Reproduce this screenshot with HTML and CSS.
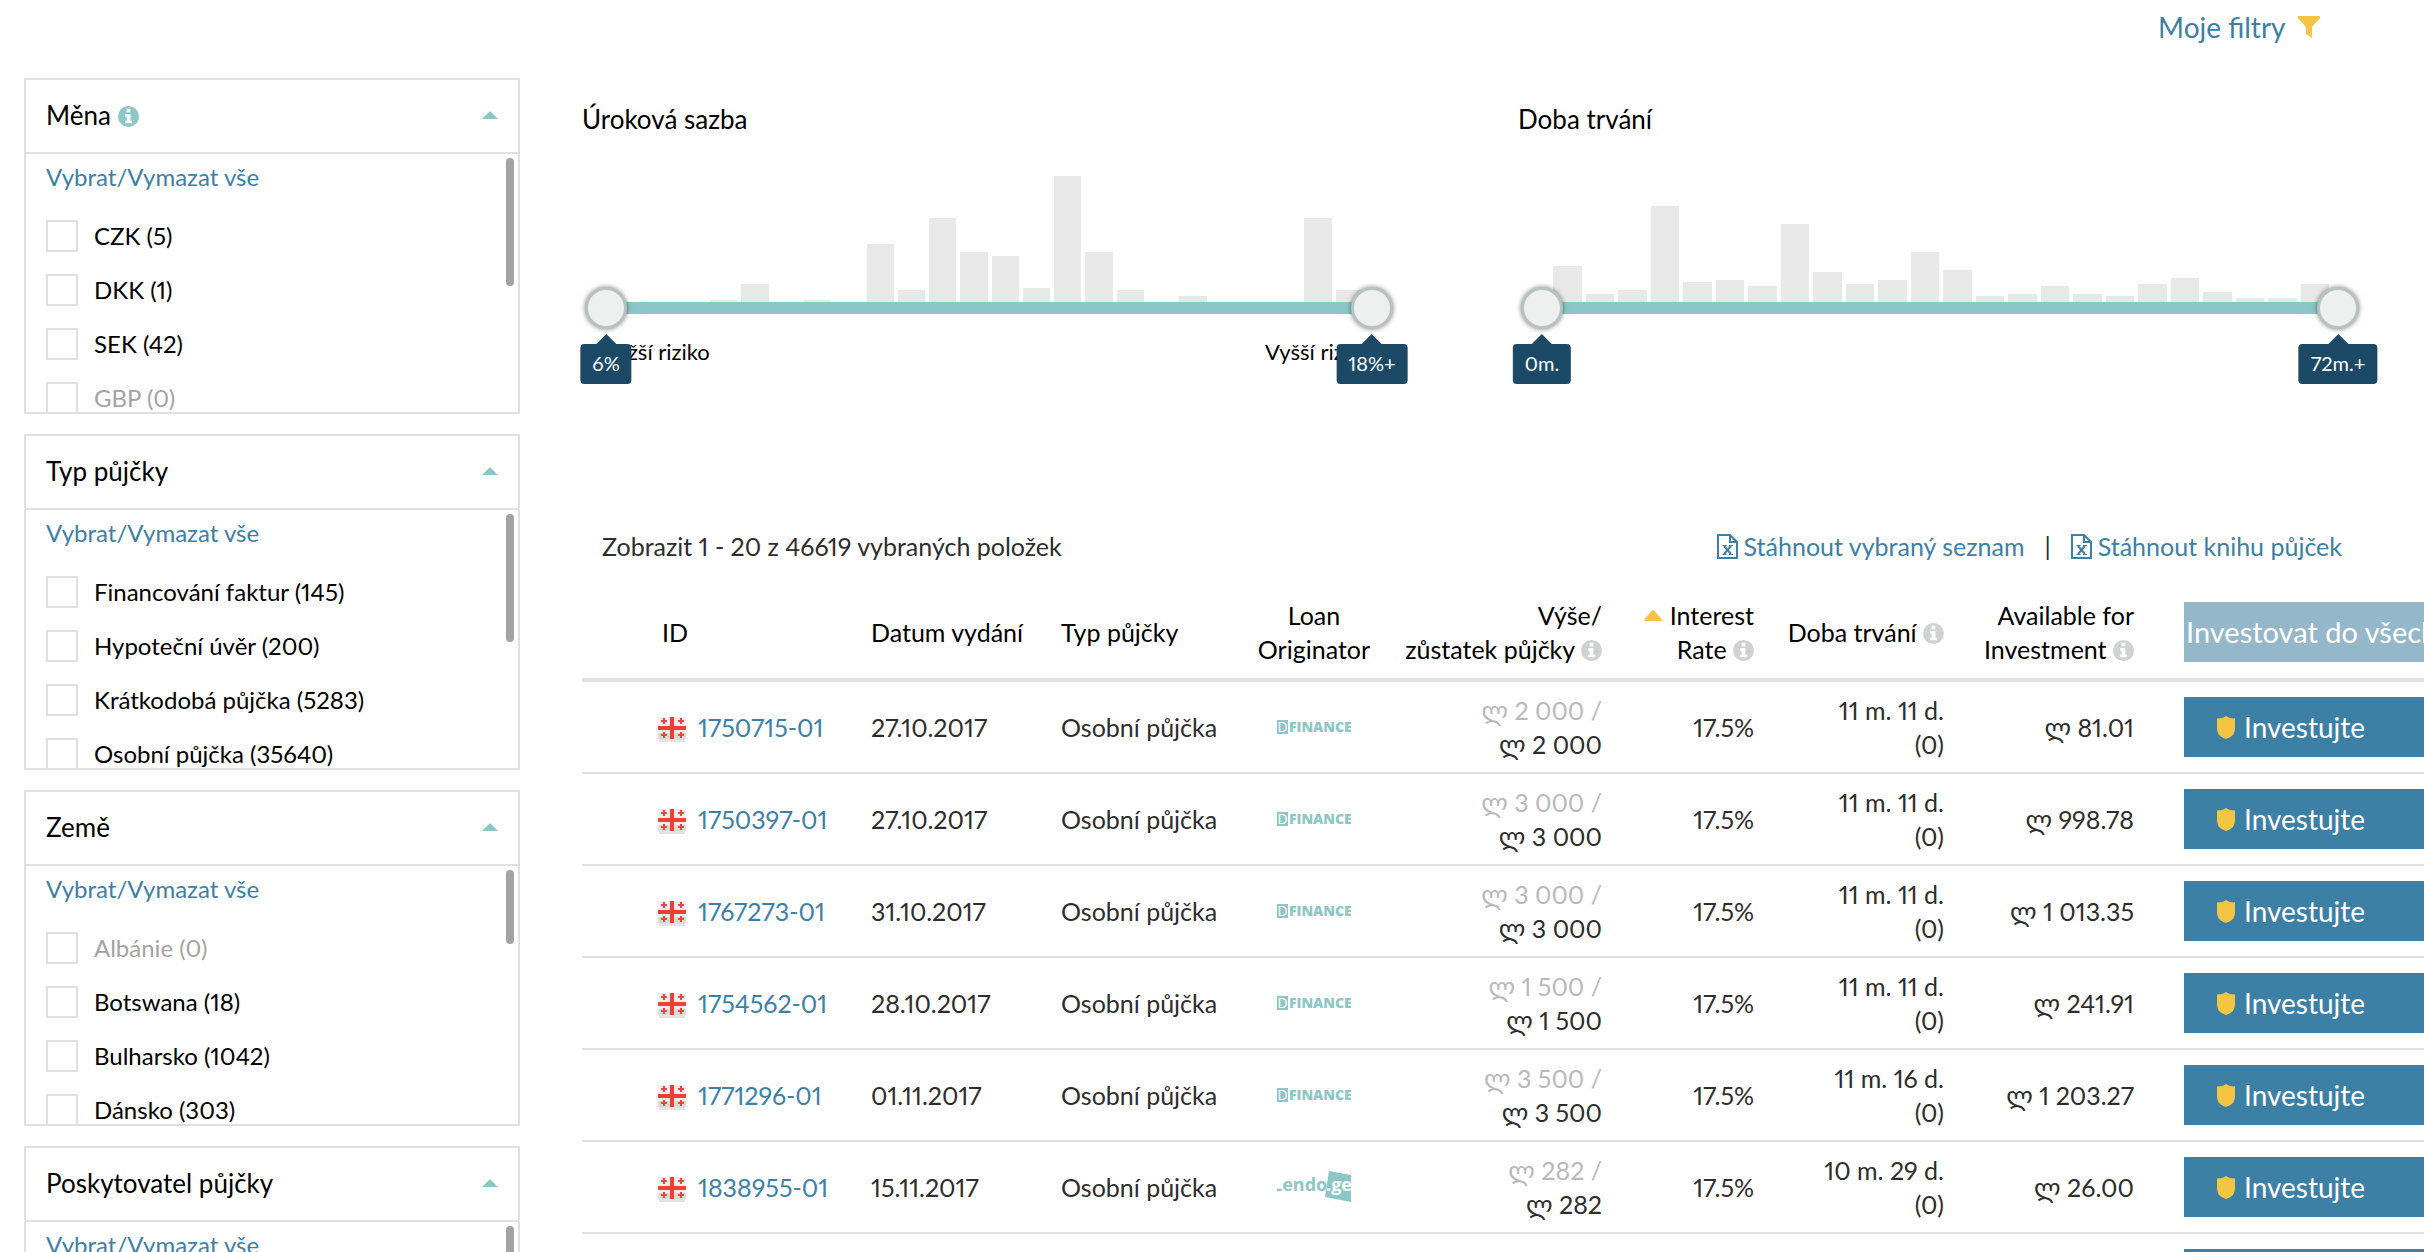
FILE: index.html
```html
<!DOCTYPE html>
<html lang="cs">
<head>
<meta charset="utf-8">
<meta name="viewport" content="width=device-width, initial-scale=1">
<title>Primární trh</title>
<link rel="stylesheet" href="styles.css">
</head>
<body>
<svg class="sprite" aria-hidden="true">
  <symbol id="info" viewBox="0 0 22 22"><circle cx="11" cy="11" r="11" fill="currentColor"/><path fill="#fff" d="M9 3h4v3.500H9zM7.500 8.500H13v7h1.800V18H7.500v-2.500H9V11H7.500z"/></symbol>
  <symbol id="caret" viewBox="0 0 16 8"><path fill="currentColor" d="M8 0l8 8H0z"/></symbol>
  <symbol id="sort" viewBox="0 0 18 11"><path fill="currentColor" d="M9 0q.7 0 1.300.7L17.500 9q1 2-.8 2H1.300q-1.800 0-.8-2L7.700.7Q8.300 0 9 0z"/></symbol>
  <symbol id="funnel" viewBox="0 0 22 22"><path fill="currentColor" d="M0 0h22v2l-8 9v11l-6-4v-7L0 2z"/></symbol>
  <symbol id="shield" viewBox="0 0 20 23"><path fill="currentColor" d="M10 0q3 2.500 9 2.500V12q0 7-5.500 9.500L10 23l-3.500-1.500Q1 19 1 12V2.500q6 0 9-2.500z"/></symbol>
  <symbol id="xls" viewBox="0 0 21 25"><path fill="none" stroke="currentColor" stroke-width="2" d="M1 1h12l7 7v16H1zM13 1v7h7"/><path fill="none" stroke="currentColor" stroke-width="2" d="M7 12l7 8M14 12l-7 8"/><path fill="none" stroke="currentColor" d="M5.500 11.500h4M12 11.500h4M5.500 20.500h4M12 20.500h4"/></symbol>
  <symbol id="flag-ge" viewBox="0 0 28 28"><path fill="#c9c9c9" opacity=".5" d="M1 22h26v4H1z"/><path fill="#efedec" d="M0 1h28v22H0z"/><path fill="#dbdad9" d="M0 17h28v6H0z"/><path fill="#ee4035" d="M12 1h4v22h-4zM0 10h28v4H0z"/><path fill="#e8483f" d="M5 2h2v2h2v2H7v2H5V6H3V4h2zM22 2h2v2h2v2h-2v2h-2V6h-2V4h2zM5 16h2v2h2v2H7v2H5v-2H3v-2h2zM22 16h2v2h2v2h-2v2h-2v-2h-2v-2h2z"/></symbol>
</svg>

<header class="topbar"><a class="my-filters" href="#">Moje filtry <svg class="i-funnel"><use href="#funnel"/></svg></a></header>

<div class="page">
  <aside class="sidebar">
    <section class="panel">
      <h2 class="panel-head"><span>Měna <svg class="i-info teal"><use href="#info"/></svg></span><svg class="i-caret"><use href="#caret"/></svg></h2>
      <div class="panel-body">
        <a href="#">Vybrat/Vymazat vše</a>
        <label><input type="checkbox">CZK (5)</label>
        <label><input type="checkbox">DKK (1)</label>
        <label><input type="checkbox">SEK (42)</label>
        <label class="off"><input type="checkbox" disabled>GBP (0)</label>
        <span class="thumb"></span>
      </div>
    </section>
    <section class="panel">
      <h2 class="panel-head"><span>Typ půjčky</span><svg class="i-caret"><use href="#caret"/></svg></h2>
      <div class="panel-body">
        <a href="#">Vybrat/Vymazat vše</a>
        <label><input type="checkbox">Financování faktur (145)</label>
        <label><input type="checkbox">Hypoteční úvěr (200)</label>
        <label><input type="checkbox">Krátkodobá půjčka (5283)</label>
        <label><input type="checkbox">Osobní půjčka (35640)</label>
        <span class="thumb"></span>
      </div>
    </section>
    <section class="panel">
      <h2 class="panel-head"><span>Země</span><svg class="i-caret"><use href="#caret"/></svg></h2>
      <div class="panel-body">
        <a href="#">Vybrat/Vymazat vše</a>
        <label class="off"><input type="checkbox" disabled>Albánie (0)</label>
        <label><input type="checkbox">Botswana (18)</label>
        <label><input type="checkbox">Bulharsko (1042)</label>
        <label><input type="checkbox">Dánsko (303)</label>
        <span class="thumb thumb-short"></span>
      </div>
    </section>
    <section class="panel">
      <h2 class="panel-head"><span>Poskytovatel půjčky</span><svg class="i-caret"><use href="#caret"/></svg></h2>
      <div class="panel-body">
        <a href="#">Vybrat/Vymazat vše</a>
        <span class="thumb"></span>
      </div>
    </section>
  </aside>

  <main class="content">
    <div class="sliders">
      <section>
        <h2 class="slider-title">Úroková sazba</h2>
        <div class="slider">
          <div class="bars">
            <i></i><i></i><i></i><i></i><i style="height:2px"></i><i style="height:18px"></i><i></i><i style="height:2px"></i><i></i><i style="height:58px"></i><i style="height:12px"></i><i style="height:84px"></i><i style="height:50px"></i><i style="height:46px"></i><i style="height:14px"></i><i style="height:126px"></i><i style="height:50px"></i><i style="height:12px"></i><i></i><i style="height:6px"></i><i></i><i></i><i></i><i style="height:84px"></i><i style="height:12px"></i>
          </div>
          <div class="range">
            <input type="range" min="6" max="18" value="6" aria-label="Úroková sazba od">
            <input type="range" min="6" max="18" value="18" aria-label="Úroková sazba do">
            <output class="tip tip-min">6%</output>
            <output class="tip tip-max">18%+</output>
          </div>
          <div class="risk"><span>Nižší riziko</span><span>Vyšší riziko</span></div>
        </div>
      </section>
      <section>
        <h2 class="slider-title">Doba trvání</h2>
        <div class="slider">
          <div class="bars">
            <i></i><i style="height:36px"></i><i style="height:8px"></i><i style="height:12px"></i><i style="height:96px"></i><i style="height:20px"></i><i style="height:22px"></i><i style="height:16px"></i><i style="height:78px"></i><i style="height:30px"></i><i style="height:18px"></i><i style="height:22px"></i><i style="height:50px"></i><i style="height:32px"></i><i style="height:6px"></i><i style="height:8px"></i><i style="height:16px"></i><i style="height:8px"></i><i style="height:6px"></i><i style="height:18px"></i><i style="height:24px"></i><i style="height:10px"></i><i style="height:4px"></i><i style="height:4px"></i><i style="height:18px"></i>
          </div>
          <div class="range">
            <input type="range" min="0" max="72" value="0" aria-label="Doba trvání od">
            <input type="range" min="0" max="72" value="72" aria-label="Doba trvání do">
            <output class="tip tip-min">0m.</output>
            <output class="tip tip-max">72m.+</output>
          </div>
        </div>
      </section>
    </div>

    <div class="summary">
      <span>Zobrazit 1 - 20 z 46619 vybraných položek</span>
      <span class="downloads">
        <a href="#"><svg class="i-xls"><use href="#xls"/></svg>Stáhnout vybraný seznam</a>
        <span>|</span>
        <a href="#"><svg class="i-xls"><use href="#xls"/></svg>Stáhnout knihu půjček</a>
      </span>
    </div>

    <table class="loans">
      <colgroup><col class="c-id"><col class="c-text"><col class="c-text"><col class="c-orig"><col class="c-amount"><col class="c-rate"><col class="c-term"><col class="c-term"><col></colgroup>
      <thead>
        <tr>
          <th class="id">ID</th><th>Datum vydání</th><th>Typ půjčky</th><th class="orig">Loan<br>Originator</th>
          <th class="num">Výše/<br>zůstatek půjčky <svg class="i-info"><use href="#info"/></svg></th>
          <th class="num"><svg class="i-sort"><use href="#sort"/></svg> Interest<br>Rate <svg class="i-info"><use href="#info"/></svg></th>
          <th class="num">Doba trvání <svg class="i-info"><use href="#info"/></svg></th>
          <th class="num">Available for<br>Investment <svg class="i-info"><use href="#info"/></svg></th>
          <th class="act"><button class="btn btn-all" disabled>Investovat do všech</button></th>
        </tr>
      </thead>
      <tbody>
        <tr>
          <td class="id"><svg class="i-flag"><use href="#flag-ge"/></svg><a href="#">1750715-01</a></td><td>27.10.2017</td><td>Osobní půjčka</td>
          <td class="orig"><span class="logo-d"><b>D</b>FINANCE</span></td>
          <td class="num"><span class="dim">ლ 2 000 /</span><br>ლ 2 000</td><td class="num">17.5%</td><td class="num">11 m. 11 d.<br>(0)</td><td class="num">ლ 81.01</td>
          <td class="act"><button class="btn"><svg class="i-shield"><use href="#shield"/></svg>Investujte</button></td>
        </tr>
        <tr>
          <td class="id"><svg class="i-flag"><use href="#flag-ge"/></svg><a href="#">1750397-01</a></td><td>27.10.2017</td><td>Osobní půjčka</td>
          <td class="orig"><span class="logo-d"><b>D</b>FINANCE</span></td>
          <td class="num"><span class="dim">ლ 3 000 /</span><br>ლ 3 000</td><td class="num">17.5%</td><td class="num">11 m. 11 d.<br>(0)</td><td class="num">ლ 998.78</td>
          <td class="act"><button class="btn"><svg class="i-shield"><use href="#shield"/></svg>Investujte</button></td>
        </tr>
        <tr>
          <td class="id"><svg class="i-flag"><use href="#flag-ge"/></svg><a href="#">1767273-01</a></td><td>31.10.2017</td><td>Osobní půjčka</td>
          <td class="orig"><span class="logo-d"><b>D</b>FINANCE</span></td>
          <td class="num"><span class="dim">ლ 3 000 /</span><br>ლ 3 000</td><td class="num">17.5%</td><td class="num">11 m. 11 d.<br>(0)</td><td class="num">ლ 1 013.35</td>
          <td class="act"><button class="btn"><svg class="i-shield"><use href="#shield"/></svg>Investujte</button></td>
        </tr>
        <tr>
          <td class="id"><svg class="i-flag"><use href="#flag-ge"/></svg><a href="#">1754562-01</a></td><td>28.10.2017</td><td>Osobní půjčka</td>
          <td class="orig"><span class="logo-d"><b>D</b>FINANCE</span></td>
          <td class="num"><span class="dim">ლ 1 500 /</span><br>ლ 1 500</td><td class="num">17.5%</td><td class="num">11 m. 11 d.<br>(0)</td><td class="num">ლ 241.91</td>
          <td class="act"><button class="btn"><svg class="i-shield"><use href="#shield"/></svg>Investujte</button></td>
        </tr>
        <tr>
          <td class="id"><svg class="i-flag"><use href="#flag-ge"/></svg><a href="#">1771296-01</a></td><td>01.11.2017</td><td>Osobní půjčka</td>
          <td class="orig"><span class="logo-d"><b>D</b>FINANCE</span></td>
          <td class="num"><span class="dim">ლ 3 500 /</span><br>ლ 3 500</td><td class="num">17.5%</td><td class="num">11 m. 16 d.<br>(0)</td><td class="num">ლ 1 203.27</td>
          <td class="act"><button class="btn"><svg class="i-shield"><use href="#shield"/></svg>Investujte</button></td>
        </tr>
        <tr>
          <td class="id"><svg class="i-flag"><use href="#flag-ge"/></svg><a href="#">1838955-01</a></td><td>15.11.2017</td><td>Osobní půjčka</td>
          <td class="orig"><svg class="logo-l" viewBox="0 0 74 32"><path fill="#8bc7c6" d="M52 0l22 4v27l-26-5z"/><text x="-5" y="20">Lendo</text><text x="49" y="20" class="ge">.ge</text></svg></td>
          <td class="num"><span class="dim">ლ 282 /</span><br>ლ 282</td><td class="num">17.5%</td><td class="num">10 m. 29 d.<br>(0)</td><td class="num">ლ 26.00</td>
          <td class="act"><button class="btn"><svg class="i-shield"><use href="#shield"/></svg>Investujte</button></td>
        </tr>
        <tr>
          <td class="id"></td><td></td><td></td><td class="orig"></td><td class="num"></td><td class="num"></td><td class="num"></td><td class="num"></td>
          <td class="act"><button class="btn" aria-label="Investujte"></button></td>
        </tr>
      </tbody>
    </table>
  </main>
</div>
</body>
</html>
```
FILE: styles.css
```css
* { box-sizing: border-box; }

body {
  margin: 0;
  height: 100vh;
  overflow: hidden;
  background: #fff;
  color: #2d2d2d;
  font: 24px/34px Lato, "DejaVu Sans", sans-serif;
  font-variant-numeric: proportional-nums;
}

a { color: #3c80a6; text-decoration: none; }
h2 { margin: 0; font-weight: 400; color: #000; }
svg { overflow: hidden; }

.sprite { position: absolute; width: 0; height: 0; }

.i-info { width: 21px; height: 21px; color: #d0d2d2; vertical-align: -2px; }
.teal { color: #8bc7c6; }
.i-caret { width: 16px; height: 8px; color: #8bc7c6; }
.i-sort { width: 20px; height: 11px; color: #f4c542; vertical-align: 4px; }
.i-funnel { width: 22px; height: 22px; color: #f4c542; margin-left: 6px; }
.i-xls { width: 21px; height: 25px; flex: none; }
.i-shield { width: 20px; height: 23px; color: #f4c542; flex: none; }
.i-flag { width: 28px; height: 28px; flex: none; }

.topbar {
  display: flex;
  justify-content: flex-end;
  height: 78px;
  padding: 10px 104px 0 0;
  font-size: 28px;
}
.my-filters { height: 34px; }

.page {
  display: grid;
  grid-template-columns: 496px minmax(0, 1fr);
  gap: 62px;
  padding-left: 24px;
}

/* Filter panels */
.sidebar { display: flex; flex-direction: column; gap: 20px; }
.panel { border: 2px solid #e0e0e0; }
.panel-head {
  display: flex;
  align-items: center;
  justify-content: space-between;
  height: 74px;
  padding: 0 20px 2px;
  border-bottom: 2px solid #e0e0e0;
  font-size: 26px;
}
.panel-body {
  position: relative;
  height: 258px;
  padding: 6px 20px 0;
  overflow: hidden;
}
.panel-body a { display: block; margin-bottom: 15px; }
.panel-body label {
  display: flex;
  align-items: center;
  gap: 16px;
  height: 54px;
  color: #000;
}
.panel-body .off { color: #a3a3a3; }
.panel-body input {
  appearance: none;
  width: 32px;
  height: 32px;
  margin: 0;
  border: 2px solid #e0e0e0;
  background: #fff;
}
.thumb {
  position: absolute;
  top: 4px;
  right: 4px;
  width: 8px;
  height: 128px;
  border-radius: 4px;
  background: #a3a3a3;
}
.thumb-short { height: 74px; }

/* Range sliders with histograms */
.sliders {
  display: grid;
  grid-template-columns: 814fr 844fr;
  gap: 122px;
  height: 448px;
  padding: 24px 62px 0 0;
}
.slider-title { font-size: 26px; }
.slider { margin: 40px 3px 0; }
.bars {
  display: grid;
  grid-template-columns: repeat(25, 1fr);
  gap: 4px;
  align-items: end;
  height: 126px;
  padding-right: 30px;
}
.bars i { background: #e8e8e8; }
.range {
  position: relative;
  height: 12px;
  margin: 0 21px;
  background: #8bc7c6;
}
.range input {
  position: absolute;
  top: -15px;
  left: -21px;
  width: calc(100% + 42px);
  height: 42px;
  margin: 0;
  appearance: none;
  background: none;
  pointer-events: none;
}
.range input::-webkit-slider-thumb {
  appearance: none;
  width: 42px;
  height: 42px;
  border: 3px solid #b8c2c2;
  border-radius: 50%;
  background: #eef0f0;
  box-shadow: 0 0 5px rgba(0, 0, 0, .5);
  pointer-events: auto;
}
.tip {
  position: absolute;
  top: 42px;
  z-index: 1;
  height: 40px;
  padding: 0 12px;
  border-radius: 4px;
  background: #1c4966;
  color: #fff;
  font-size: 20px;
  line-height: 38px;
}
.tip::before {
  content: "";
  position: absolute;
  top: -10px;
  left: calc(50% - 10px);
  border: 10px solid transparent;
  border-top: 0;
  border-bottom-color: #1c4966;
}
.tip-min { left: 0; transform: translateX(-50%); }
.tip-max { right: 0; transform: translateX(50%); }
.risk {
  display: flex;
  justify-content: space-between;
  margin: 21px 21px 0;
  color: #000;
  font-size: 22px;
}

/* Loan list */
.summary {
  display: flex;
  justify-content: space-between;
  align-items: center;
  height: 40px;
  margin-bottom: 20px;
  padding: 0 82px 0 20px;
  font-size: 25px;
}
.downloads { display: flex; gap: 20px; }
.downloads a { display: flex; align-items: center; gap: 6px; }

.loans {
  width: 100%;
  table-layout: fixed;
  border-collapse: separate;
  border-spacing: 0;
  font-size: 25px;
  white-space: nowrap;
}
.c-id { width: 289px; }
.c-text { width: 190px; }
.c-orig { width: 126px; }
.c-amount { width: 225px; }
.c-rate { width: 152px; }
.c-term { width: 190px; }
.loans th, .loans td { padding: 0; text-align: left; vertical-align: middle; }
.loans th {
  height: 96px;
  border-bottom: 4px solid #e0e0e0;
  color: #000;
  font-weight: 400;
}
.loans td { height: 92px; border-bottom: 2px solid #e0e0e0; }
.loans .id { padding-left: 76px; }
.loans th.id { padding-left: 80px; }
.loans .num { text-align: right; }
.loans .orig { text-align: center; }
.loans .act { padding-left: 50px; }
.i-flag { margin-right: 12px; vertical-align: -7px; }
.dim { color: #b9b9b9; }

/* Originator logos */
.logo-d {
  display: flex;
  gap: 1px;
  width: 74px;
  height: 14px;
  margin: 0 auto;
  overflow: hidden;
  color: #8bc7c6;
  font: 800 14px/14px "Open Sans", sans-serif;
}
.logo-d b {
  flex: none;
  width: 11px;
  background: #8bc7c6;
  color: #fff;
  font-weight: 400;
  text-align: center;
}
.logo-l {
  display: block;
  width: 74px;
  height: 32px;
  margin: 0 auto;
  fill: #8bc7c6;
  font: 700 18px "Open Sans", sans-serif;
}
.logo-l .ge { fill: #fff; }

.btn {
  display: flex;
  align-items: center;
  gap: 8px;
  width: 100%;
  height: 60px;
  padding: 0 0 0 32px;
  border: 0;
  overflow: hidden;
  background: #3c80a6;
  color: #fff;
  font: 28px/34px Lato, sans-serif;
  white-space: nowrap;
}
.btn-all { padding-left: 2px; background: #95b7ca; font-size: 29px; }
```
